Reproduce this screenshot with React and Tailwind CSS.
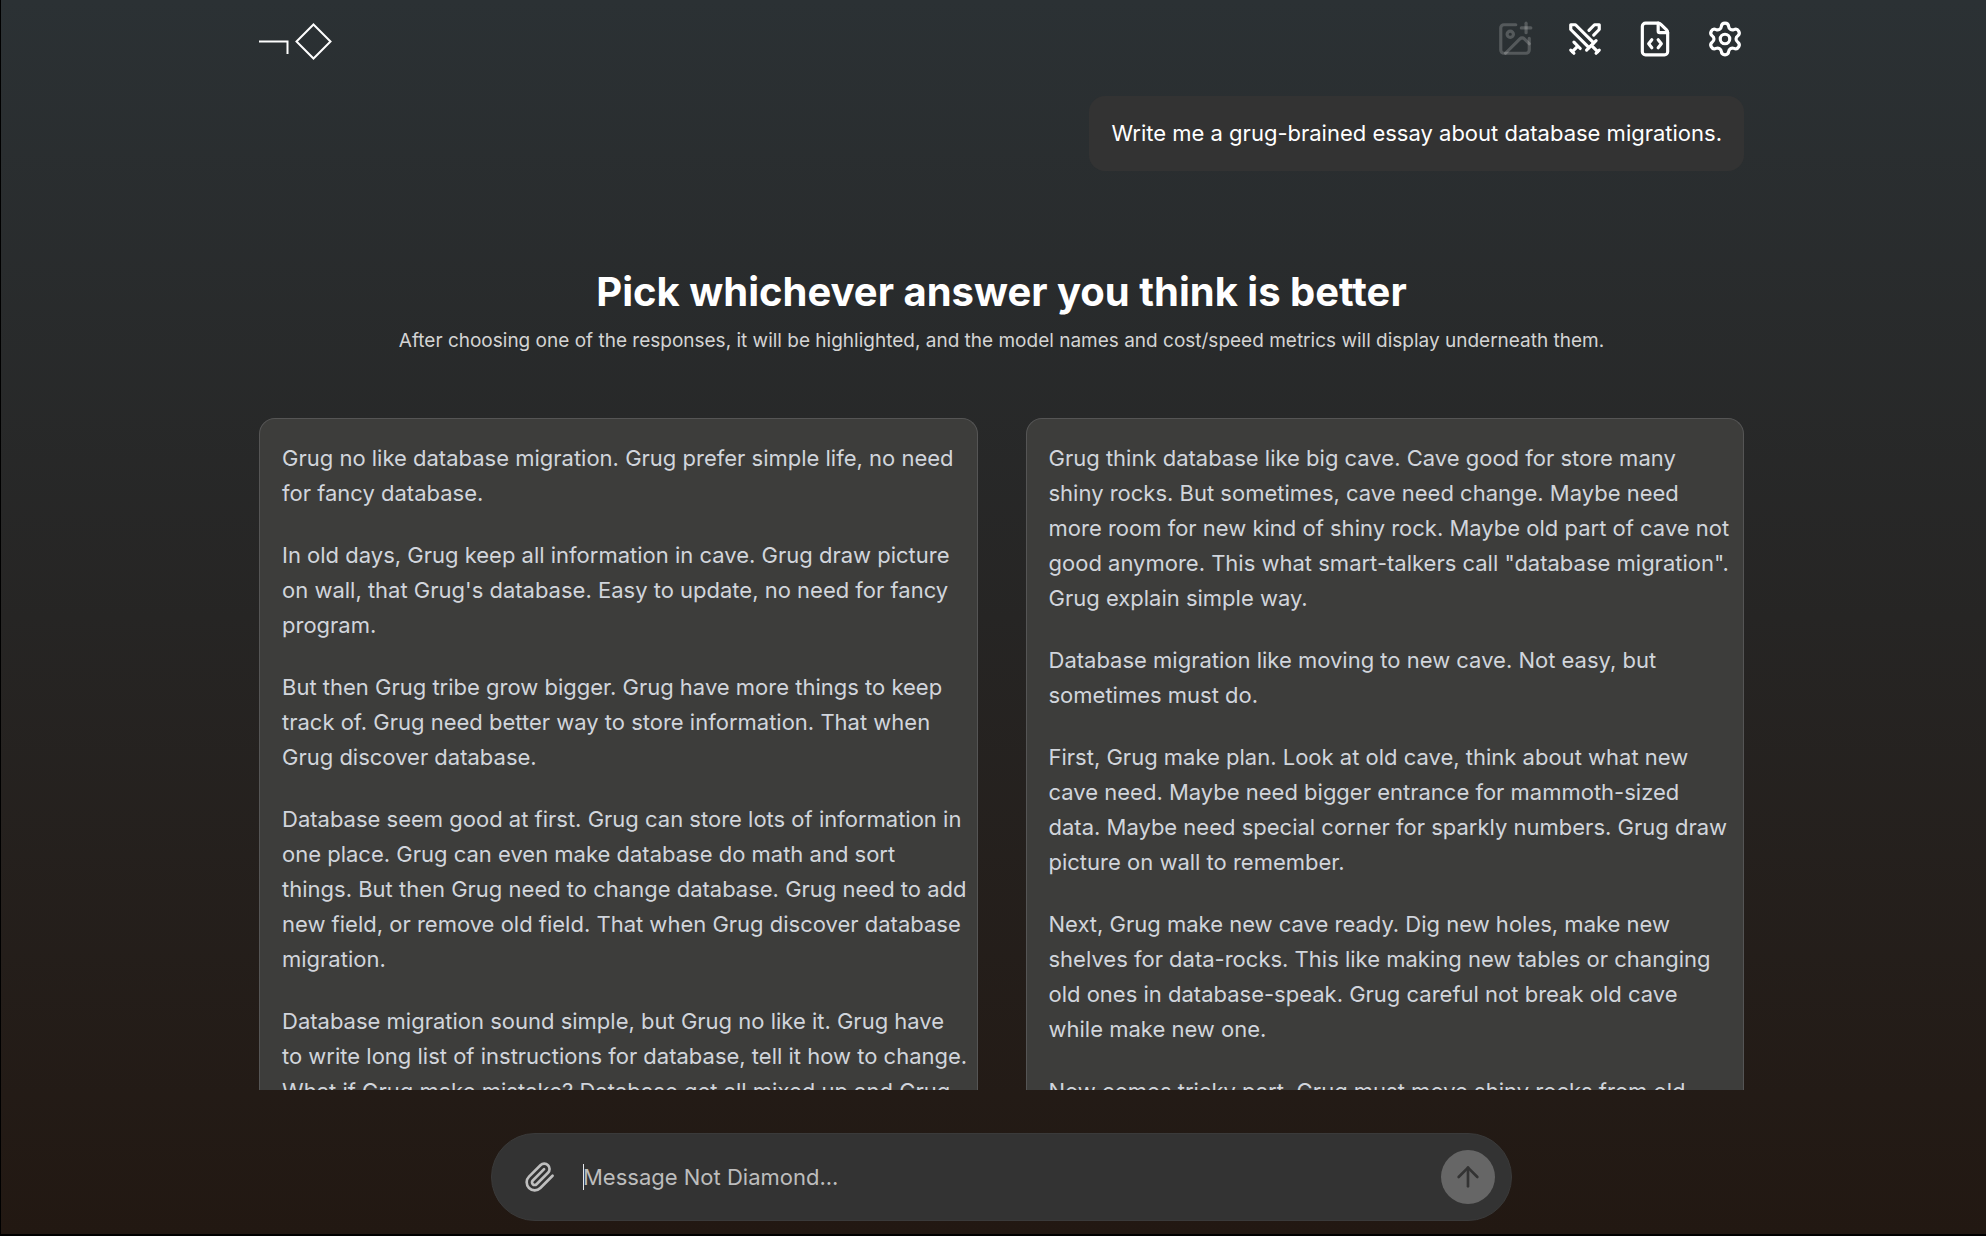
import React, { useState } from 'react';
import { ArrowUp, FileCode, ImagePlus, Settings, Swords } from 'lucide-react';

const leftAnswer = [
    'Grug no like database migration. Grug prefer simple life, no need for fancy database.',
    "In old days, Grug keep all information in cave. Grug draw picture on wall, that Grug's database. Easy to update, no need for fancy program.",
    'But then Grug tribe grow bigger. Grug have more things to keep track of. Grug need better way to store information. That when Grug discover database.',
    'Database seem good at first. Grug can store lots of information in one place. Grug can even make database do math and sort things. But then Grug need to change database. Grug need to add new field, or remove old field. That when Grug discover database migration.',
    'Database migration sound simple, but Grug no like it. Grug have to write long list of instructions for database, tell it how to change. What if Grug make mistake? Database get all mixed up and Grug',
];

const rightAnswer = [
    'Grug think database like big cave. Cave good for store many shiny rocks. But sometimes, cave need change. Maybe need more room for new kind of shiny rock. Maybe old part of cave not good anymore. This what smart-talkers call "database migration". Grug explain simple way.',
    'Database migration like moving to new cave. Not easy, but sometimes must do.',
    'First, Grug make plan. Look at old cave, think about what new cave need. Maybe need bigger entrance for mammoth-sized data. Maybe need special corner for sparkly numbers. Grug draw picture on wall to remember.',
    'Next, Grug make new cave ready. Dig new holes, make new shelves for data-rocks. This like making new tables or changing old ones in database-speak. Grug careful not break old cave while make new one.',
    'Now comes tricky part. Grug must move shiny rocks from old',
];

const Logo = () => (
    <svg width="73" height="38" viewBox="0 0 73 38" fill="none" stroke="white" strokeWidth="2" aria-label="Not Diamond">
        <path d="M0 18.5H28.5V31" />
        <path d="M54.5 1.5L71.5 18.5L54.5 35.5L37.5 18.5Z" />
    </svg>
);

const PaperclipIcon = () => (
    <svg width="32" height="32" viewBox="0 0 24 24" fill="none" stroke="currentColor" strokeWidth="2" strokeLinecap="round" strokeLinejoin="round">
        <path d="m21.44 11.05-9.19 9.19a6 6 0 0 1-8.49-8.49l8.57-8.57A4 4 0 1 1 18 8.84l-8.59 8.57a2 2 0 0 1-2.83-2.83l8.49-8.48" />
    </svg>
);

const AnswerCard = ({ paragraphs }) => (
    <article className="rounded-t-2xl border border-b-0 border-[#555555] bg-[#3d3d3b] py-[22px] pl-[22px] pr-2 text-[22px] leading-[35px] text-gray-300">
        {paragraphs.map((text) => (
            <p key={text} className="mb-[27px]">{text}</p>
        ))}
    </article>
);

const Header = () => (
    <header className="flex items-start justify-between pt-5">
        <a href="#home" className="pt-[3px]"><Logo /></a>
        <nav className="flex items-center gap-8">
            <button type="button" disabled aria-label="Generate image" className="text-white/20"><ImagePlus size={38} /></button>
            <button type="button" aria-label="Arena"><Swords size={38} /></button>
            <button type="button" aria-label="API docs"><FileCode size={38} /></button>
            <button type="button" aria-label="Settings"><Settings size={38} /></button>
        </nav>
    </header>
);

const Composer = () => {
    const [message, setMessage] = useState('');

    const handleSubmit = (e) => {
        e.preventDefault();
        setMessage('');
    };

    return (
        <form onSubmit={handleSubmit} className="mx-auto flex h-[88px] w-full max-w-[1021px] items-center rounded-full border border-[#3a3a3a] bg-[#333333] pl-8 pr-4">
            <button type="button" aria-label="Attach file" className="text-[#bfbfbf]"><PaperclipIcon /></button>
            <div className="ml-[27px] flex flex-1 items-center">
                <span className="-mr-px h-[26px] w-px bg-gray-200" />
                <input
                    type="text"
                    aria-label="Message"
                    value={message}
                    onChange={(e) => setMessage(e.target.value)}
                    placeholder="Message Not Diamond..."
                    className="w-full bg-transparent text-[22px] leading-8 text-white caret-white outline-none placeholder:text-[#bdbdbd]"
                />
            </div>
            <button type="submit" aria-label="Send" className="flex size-[54px] items-center justify-center rounded-full bg-[#666666] text-[#333333]">
                <ArrowUp size={32} />
            </button>
        </form>
    );
};

const App = () => {
    return (
        <div className="flex h-screen flex-col border-b-2 border-l border-black bg-linear-to-b from-[#2b3134] via-[#262524] via-50% to-[#221812] pl-4 font-['Inter',sans-serif] text-white">
            <div className="mx-auto flex min-h-0 w-full max-w-[1485px] flex-1 flex-col">
                <Header />
                <main className="mt-[35px] min-h-0 flex-1 overflow-hidden">
                    <div className="ml-auto w-fit rounded-2xl bg-[#333333] px-[22px] py-5 text-[22px] leading-[35px]">
                        Write me a grug-brained essay about database migrations.
                    </div>
                    <div className="mt-24 text-center">
                        <h1 className="text-[40px] font-bold leading-[50px]">Pick whichever answer you think is better</h1>
                        <p className="mt-[10px] text-[19px] leading-7 text-[#d4d4d4]">
                            After choosing one of the responses, it will be highlighted, and the model names and cost/speed metrics will display underneath them.
                        </p>
                    </div>
                    <div className="mt-[63px] grid grid-cols-2 gap-12">
                        <AnswerCard paragraphs={leftAnswer} />
                        <AnswerCard paragraphs={rightAnswer} />
                    </div>
                </main>
            </div>
            <footer className="pb-[13px] pt-[43px]">
                <Composer />
            </footer>
        </div>
    );
};

export default App;
